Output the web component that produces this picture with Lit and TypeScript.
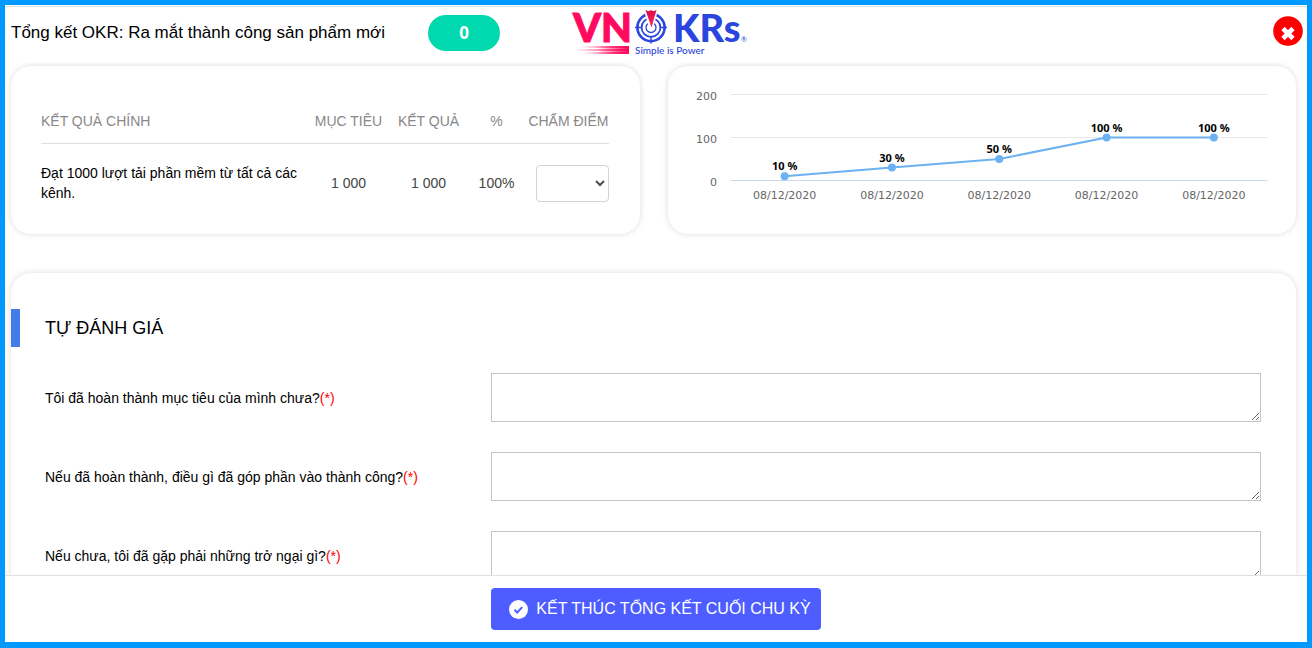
import { LitElement, html, svg, css } from "lit";
import { customElement, property } from "lit/decorators.js";

interface Checkin {
  date: string;
  percent: number;
}

interface KeyResult {
  name: string;
  target: string;
  result: string;
  percent: string;
}

@customElement("vnokrs-logo")
export class VnokrsLogo extends LitElement {
  static styles = css`
    :host {
      display: block;
    }
    .logo {
      display: block;
      overflow: visible;
    }
    .word {
      font: 900 40px Lato, sans-serif;
    }
    .word-end {
      font: 900 38px Lato, sans-serif;
    }
    .tagline {
      font: 500 10px Lato, sans-serif;
    }
    .mark {
      font: 400 7px Lato, sans-serif;
    }
  `;

  render() {
    return html`
      <svg class="logo" width="180" height="50" viewBox="0 0 180 50" role="img" aria-label="VNOKRs">
        <defs>
          <linearGradient id="fade" x1="0" x2="1" y1="0" y2="0">
            <stop offset="0" stop-color="#ff0a5e" stop-opacity="0" />
            <stop offset="1" stop-color="#ff0a5e" />
          </linearGradient>
          <linearGradient id="arrow" x1="0" x2="0" y1="0" y2="1">
            <stop offset="0" stop-color="#d90c4a" />
            <stop offset="1" stop-color="#ff2a5e" />
          </linearGradient>
        </defs>
        <text class="word" x="6" y="34" fill="#ff0a5e" stroke="#ff0a5e" stroke-width="1">VN</text>
        <rect x="14" y="38" width="48" height="2" fill="url(#fade)" />
        <rect x="8" y="41" width="54" height="2" fill="url(#fade)" />
        <rect x="16" y="44" width="46" height="2" fill="url(#fade)" />
        <rect x="30" y="38" width="32" height="8" fill="url(#fade)" />
        <g fill="none" stroke="#2b46de">
          <circle cx="84" cy="19.500" r="13.600" stroke-width="2.600" />
          <circle cx="84" cy="19.500" r="9.400" stroke-width="1.800" />
          <circle cx="84" cy="19.500" r="5" stroke-width="1.300" />
          <path d="M84 29v6.500M68 19.500h7M93 19.500h7" stroke-width="1.400" />
        </g>
        <path d="M78 2h12L85 20h-2z" fill="#fff" stroke="#fff" stroke-width="2" />
        <path d="M78.500 2l2.800 1.200L84 2.200l2.700 1L89.500 2 84.500 19.500z" fill="url(#arrow)" />
        <text class="word-end" x="106" y="34" fill="#2b46de">KRs</text>
        <text class="tagline" x="68" y="46" fill="#2b46de">Simple is Power</text>
        <text class="mark" x="174" y="34" fill="#2b46de">®</text>
      </svg>
    `;
  }
}

@customElement("progress-chart")
export class ProgressChart extends LitElement {
  @property({ attribute: false }) points: Checkin[] = [];

  static styles = css`
    :host {
      display: block;
      padding: 20px 29px 0 63px;
    }
    .plot {
      display: block;
      width: 100%;
      height: 120px;
      overflow: visible;
    }
    .axis {
      font: 11px "DejaVu Sans", sans-serif;
      fill: #666;
    }
    .value {
      font: bold 11px "Noto Sans", sans-serif;
      fill: #000;
    }
    .grid {
      stroke: #e6e6e6;
    }
    .base {
      stroke: #ccd6eb;
    }
    .series {
      stroke: #6cb2f2;
      stroke-width: 2;
    }
    .dot {
      fill: #6cb2f2;
    }
  `;

  private x(i: number) {
    return `${((i + 0.5) / this.points.length) * 100}%`;
  }

  private y(value: number) {
    return 94.5 - value * 0.43;
  }

  render() {
    const p = this.points;
    return html`
      <svg class="plot" role="img" aria-label="Tiến độ">
        ${[200, 100, 0].map(
          (v) => svg`
            <line class=${v ? "grid" : "base"} x1="0" x2="100%" y1=${this.y(v)} y2=${this.y(v)} />
            <text class="axis" x="-14" y=${this.y(v) + 5} text-anchor="end">${v}</text>`
        )}
        ${p.slice(1).map(
          (d, i) => svg`<line class="series" x1=${this.x(i)} y1=${this.y(p[i].percent)}
            x2=${this.x(i + 1)} y2=${this.y(d.percent)} />`
        )}
        ${p.map(
          (d, i) => svg`
            <circle class="dot" cx=${this.x(i)} cy=${this.y(d.percent)} r="4" />
            <text class="value" x=${this.x(i)} y=${this.y(d.percent) - 6} text-anchor="middle">${d.percent} %</text>
            <text class="axis" x=${this.x(i)} y="113" text-anchor="middle">${d.date}</text>`
        )}
      </svg>
    `;
  }
}

@customElement("app-root")
export class AppRoot extends LitElement {
  private results: KeyResult[] = [
    { name: "Đạt 1000 lượt tải phần mềm từ tất cả các kênh.", target: "1 000", result: "1 000", percent: "100%" },
  ];

  private checkins: Checkin[] = [10, 30, 50, 100, 100].map((percent) => ({ date: "08/12/2020", percent }));

  private questions = [
    "Tôi đã hoàn thành mục tiêu của mình chưa?",
    "Nếu đã hoàn thành, điều gì đã góp phần vào thành công?",
    "Nếu chưa, tôi đã gặp phải những trở ngại gì?",
  ];

  static styles = css`
    :host {
      display: flex;
      flex-direction: column;
      box-sizing: border-box;
      height: 100vh;
      border: 5px solid #0099ff;
      border-bottom-width: 6px;
      background: #fff;
      color: #000;
      font: 14px/20px "Liberation Sans", Arial, sans-serif;
    }
    * {
      box-sizing: border-box;
    }
    .header {
      flex: none;
      display: grid;
      grid-template-columns: 1fr auto 1fr;
      align-items: center;
      height: 56px;
      margin-top: 1px;
      padding: 0 4px 4px 6px;
      border-top: 1px solid #dedede;
    }
    .heading {
      display: flex;
      align-items: center;
      gap: 43px;
      white-space: nowrap;
    }
    .title {
      margin: 0;
      font-size: 17px;
      font-weight: 400;
      line-height: 24px;
    }
    .score {
      width: 72px;
      border-radius: 18px;
      background: #00d8b0;
      color: #fff;
      font: bold 17px/36px "Open Sans", sans-serif;
      text-align: center;
    }
    .close {
      justify-self: end;
      width: 30px;
      height: 30px;
      margin-bottom: 4px;
      padding: 0;
      border: 0;
      background: none;
    }
    .close svg {
      display: block;
    }
    .content {
      flex: 1;
      min-height: 0;
      overflow: auto;
      scrollbar-width: none;
      padding: 4px 11px 30px 6px;
    }
    .overview {
      display: grid;
      grid-template-columns: minmax(0, 1fr) minmax(0, 1fr);
      gap: 28px;
      margin-bottom: 39px;
    }
    .card {
      border-radius: 20px;
      background: #fff;
      box-shadow: 0 0 6px rgba(0, 0, 0, 0.14);
    }
    .results {
      padding: 34px 31px 11px 30px;
    }
    .table {
      width: 100%;
      table-layout: fixed;
      border-collapse: collapse;
      text-align: center;
      color: #444;
    }
    .table th {
      height: 43px;
      padding: 0;
      border-bottom: 1px solid #dedede;
      color: #888;
      font-weight: 400;
      white-space: nowrap;
    }
    .table td {
      height: 80px;
      padding: 0;
    }
    .table .name {
      padding-right: 8px;
      text-align: left;
    }
    .table .grade {
      text-align: right;
    }
    td.name {
      color: #000;
    }
    .col-number {
      width: 80px;
    }
    .col-percent {
      width: 56px;
    }
    .col-grade {
      width: 84px;
    }
    .select {
      width: 73px;
      height: 37px;
      border: 1px solid #ced4da;
      border-radius: 4px;
      background: #fff;
      color: #495057;
      font: inherit;
      vertical-align: middle;
    }
    .review {
      padding: 36px 35px 30px 0;
    }
    .review-title {
      margin: 0 0 26px;
      padding-left: 25px;
      border-left: 9px solid #457be8;
      font-size: 18px;
      font-weight: 400;
      line-height: 38px;
    }
    .question {
      display: grid;
      grid-template-columns: minmax(0, 11fr) minmax(0, 19fr);
      align-items: center;
      margin-bottom: 30px;
      padding-left: 34px;
    }
    .required {
      color: #f00;
    }
    .answer {
      display: block;
      width: 100%;
      height: 49px;
      border: 1px solid #c4c4c4;
      background: #fff;
      font: inherit;
      resize: vertical;
    }
    .footer {
      flex: none;
      display: flex;
      justify-content: center;
      padding: 12px;
      border-top: 1px solid #dee2e6;
    }
    .finish {
      display: flex;
      align-items: center;
      gap: 8px;
      height: 42px;
      padding: 0 10px 0 18px;
      border: 0;
      border-radius: 4px;
      background: #4d5dff;
      color: #fff;
      font: 16px/24px "Liberation Sans", Arial, sans-serif;
      white-space: nowrap;
    }
  `;

  render() {
    return html`
      <header class="header">
        <div class="heading">
          <h1 class="title">Tổng kết OKR: Ra mắt thành công sản phẩm mới</h1>
          <span class="score">0</span>
        </div>
        <vnokrs-logo></vnokrs-logo>
        <button class="close" type="button" aria-label="Đóng">
          <svg width="30" height="30" viewBox="0 0 30 30">
            <circle cx="15" cy="15" r="14.800" fill="#f00" />
            <path d="M10 12.500L20 22.500M20 12.500L10 22.500" fill="none" stroke="#fff" stroke-width="4.600" />
          </svg>
        </button>
      </header>
      <main class="content">
        <div class="overview">
          <section class="card results">
            <table class="table">
              <colgroup>
                <col />
                <col class="col-number" />
                <col class="col-number" />
                <col class="col-percent" />
                <col class="col-grade" />
              </colgroup>
              <thead>
                <tr>
                  <th class="name">KẾT QUẢ CHÍNH</th>
                  <th>MỤC TIÊU</th>
                  <th>KẾT QUẢ</th>
                  <th>%</th>
                  <th class="grade" id="grade">CHẤM ĐIỂM</th>
                </tr>
              </thead>
              <tbody>
                ${this.results.map(
                  (r) => html`<tr>
                    <td class="name">${r.name}</td>
                    <td>${r.target}</td>
                    <td>${r.result}</td>
                    <td>${r.percent}</td>
                    <td class="grade">
                      <select class="select" aria-labelledby="grade">
                        <option value=""></option>
                      </select>
                    </td>
                  </tr>`
                )}
              </tbody>
            </table>
          </section>
          <section class="card">
            <progress-chart .points=${this.checkins}></progress-chart>
          </section>
        </div>
        <section class="card review">
          <h2 class="review-title">TỰ ĐÁNH GIÁ</h2>
          ${this.questions.map(
            (q, i) => html`<div class="question">
              <label for="q${i}">${q}<span class="required">(*)</span></label>
              <textarea class="answer" id="q${i}"></textarea>
            </div>`
          )}
        </section>
      </main>
      <footer class="footer">
        <button class="finish" type="button">
          <svg width="19" height="19" viewBox="0 0 19 19" aria-hidden="true">
            <circle cx="9.500" cy="9.500" r="9.500" fill="#fff" />
            <path d="M5.500 9.800l2.700 2.700 5-5.400" fill="none" stroke="#4d5dff" stroke-width="2" />
          </svg>
          KẾT THÚC TỔNG KẾT CUỐI CHU KỲ
        </button>
      </footer>
    `;
  }
}
